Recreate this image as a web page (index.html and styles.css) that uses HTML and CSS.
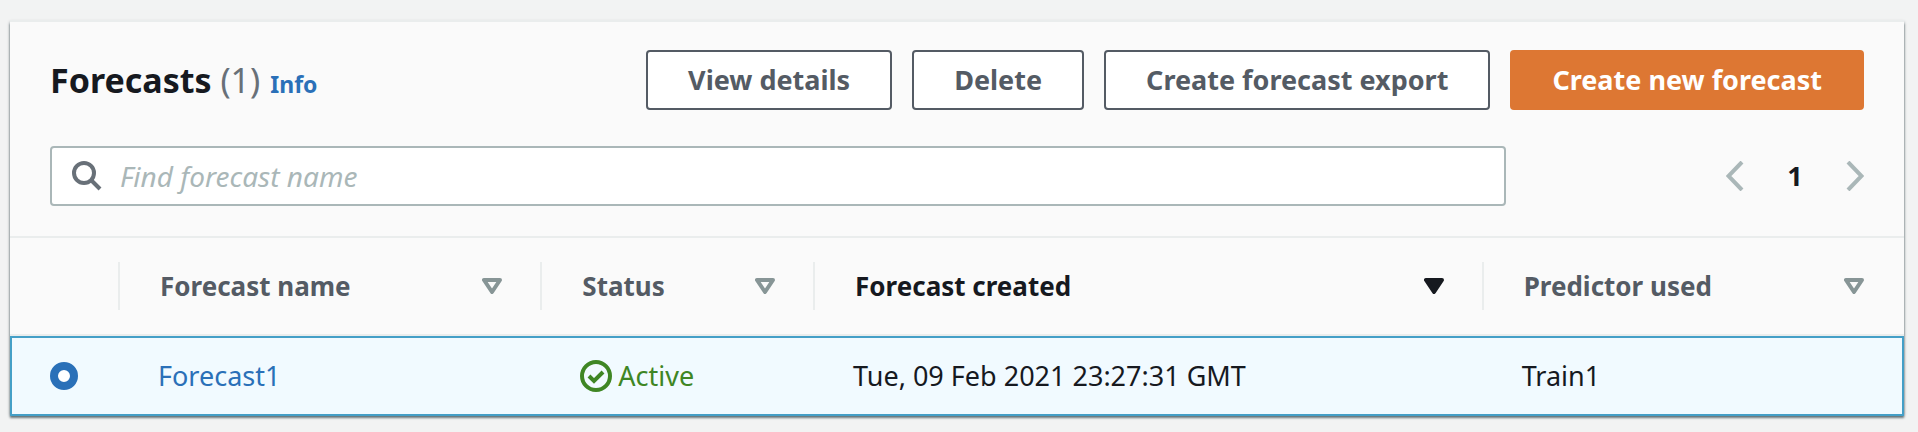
FILE: index.html
```html
<!DOCTYPE html>
<html lang="en">
<head>
<meta charset="utf-8">
<title>Forecasts</title>
<link rel="stylesheet" href="styles.css">
</head>
<body>
<main class="card">
  <header class="card-header">
    <div class="title-row">
      <div class="heading">
        <h1 class="title">Forecasts <span class="count">(1)</span></h1>
        <a class="info" href="#info">Info</a>
      </div>
      <div class="actions">
        <button class="btn" type="button">View details</button>
        <button class="btn" type="button">Delete</button>
        <button class="btn" type="button">Create forecast export</button>
        <button class="btn btn-primary" type="button">Create new forecast</button>
      </div>
    </div>
    <div class="filter-row">
      <label class="search">
        <svg class="search-icon" viewBox="0 0 30 30" aria-hidden="true"><circle cx="12" cy="12" r="10"/><path d="M19 19l9 9"/></svg>
        <input class="search-input" type="search" placeholder="Find forecast name" aria-label="Find forecast name">
      </label>
      <nav class="pager" aria-label="Pages">
        <button class="page-btn" type="button" aria-label="Previous page"><svg class="chevron" viewBox="0 0 18 30" aria-hidden="true"><path d="M16 1L2.500 15L16 29"/></svg></button>
        <button class="page-btn page-number" type="button" aria-current="page">1</button>
        <button class="page-btn" type="button" aria-label="Next page"><svg class="chevron" viewBox="0 0 18 30" aria-hidden="true"><path d="M2 1l13.500 14L2 29"/></svg></button>
      </nav>
    </div>
  </header>
  <table class="table">
    <colgroup>
      <col class="col-select"><col class="col-name"><col class="col-status"><col class="col-created"><col>
    </colgroup>
    <thead>
      <tr>
        <th class="head" aria-label="Selection"><div class="head-inner"></div></th>
        <th class="head"><div class="head-inner"><button class="sort" type="button">Forecast name<svg class="sort-icon" viewBox="0 0 20 16" aria-hidden="true"><path d="M2 2h16l-8 12z"/></svg></button></div></th>
        <th class="head"><div class="head-inner"><button class="sort" type="button">Status<svg class="sort-icon" viewBox="0 0 20 16" aria-hidden="true"><path d="M2 2h16l-8 12z"/></svg></button></div></th>
        <th class="head" aria-sort="descending"><div class="head-inner"><button class="sort sort-active" type="button">Forecast created<svg class="sort-icon" viewBox="0 0 20 16" aria-hidden="true"><path d="M2 2h16l-8 12z"/></svg></button></div></th>
        <th class="head"><div class="head-inner"><button class="sort" type="button">Predictor used<svg class="sort-icon" viewBox="0 0 20 16" aria-hidden="true"><path d="M2 2h16l-8 12z"/></svg></button></div></th>
      </tr>
    </thead>
    <tbody>
      <tr class="selected">
        <td class="cell"><input class="radio" type="radio" name="forecast" aria-label="Select Forecast1" checked></td>
        <td class="cell"><a class="link" href="#forecast1">Forecast1</a></td>
        <td class="cell"><span class="status"><svg class="status-icon" viewBox="0 0 32 32" aria-hidden="true"><circle cx="16" cy="16" r="14"/><path d="M9 16l5 5 9-9"/></svg>Active</span></td>
        <td class="cell">Tue, 09 Feb 2021 23:27:31 GMT</td>
        <td class="cell">Train1</td>
      </tr>
    </tbody>
  </table>
</main>
</body>
</html>
```
FILE: styles.css
```css
* {
  box-sizing: border-box;
}

body {
  margin: 0;
  padding: 22px 14px 16px 10px;
  background: #f2f3f3;
  color: #16191f;
  font-family: "Noto Sans", "Open Sans", sans-serif;
  font-size: 27px;
  line-height: 40px;
}

button,
input {
  font: inherit;
}

.card {
  background: #fafafa;
  box-shadow: 0 -2px 0 #eaeded, 0 2px 2px rgba(0, 28, 36, 0.5), 0 0 3px rgba(0, 28, 36, 0.4);
}

.card-header {
  display: flex;
  flex-direction: column;
  gap: 36px;
  padding: 28px 40px 30px;
  border-bottom: 2px solid #eaeded;
}

.title-row,
.filter-row,
.heading,
.actions,
.pager {
  display: flex;
}

.title-row {
  align-items: center;
  justify-content: space-between;
  gap: 20px;
}

.heading {
  align-items: baseline;
  gap: 10px;
  padding-top: 4px;
}

.title {
  margin: 0;
  font-size: 34px;
  font-weight: 700;
}

.count {
  color: #687078;
  font-weight: 400;
}

.info {
  color: #2a70b8;
  font-size: 23px;
  font-weight: 700;
  text-decoration: none;
}

.actions {
  gap: 20px;
}

.btn {
  padding: 8px 40px;
  border: 2px solid #545b64;
  border-radius: 4px;
  background: #fff;
  color: #545b64;
  font-weight: 700;
  white-space: nowrap;
}

.btn-primary {
  border-color: #dd7733;
  background: #dd7733;
  color: #fff;
}

.filter-row {
  align-items: center;
  gap: 220px;
}

.search {
  display: flex;
  flex: 1;
  align-items: center;
  gap: 18px;
  height: 60px;
  padding: 0 20px;
  border: 2px solid #aab7b8;
  border-radius: 4px;
  background: #fff;
}

.search-icon {
  width: 30px;
  height: 30px;
  fill: none;
  stroke: #687078;
  stroke-width: 4;
}

.search-input {
  flex: 1;
  min-width: 0;
  padding: 0;
  border: 0;
  outline: 0;
  background: transparent;
  font-size: 28px;
}

.search-input::placeholder {
  color: #aab7b8;
  font-style: italic;
  opacity: 1;
}

.pager {
  align-items: center;
  justify-content: space-between;
  width: 138px;
}

.page-btn {
  display: flex;
  padding: 0;
  border: 0;
  background: transparent;
}

.page-number {
  color: #16191f;
  font-weight: 700;
}

.chevron {
  width: 18px;
  height: 30px;
  fill: none;
  stroke: #aab7b8;
  stroke-width: 4;
}

.table {
  width: 100%;
  border-spacing: 0;
  table-layout: fixed;
}

.col-select {
  width: 110px;
}

.col-name {
  width: 22.3%;
}

.col-status {
  width: 14.4%;
}

.col-created {
  width: 35.3%;
}

.head {
  padding: 24px 0;
  border-bottom: 2px solid #eaeded;
  text-align: left;
}

.head-inner {
  display: flex;
  align-items: center;
  height: 48px;
  padding: 0 38px 0 40px;
  border-right: 2px solid #eaeded;
}

.head:last-child .head-inner {
  border-right-color: transparent;
}

.sort {
  display: flex;
  flex: 1;
  align-items: center;
  justify-content: space-between;
  padding: 0;
  border: 0;
  background: transparent;
  color: #545b64;
  font-size: 26px;
  font-weight: 700;
  white-space: nowrap;
}

.sort-icon {
  width: 20px;
  height: 16px;
  fill: none;
  stroke: #879596;
  stroke-width: 4;
  stroke-linejoin: round;
}

.sort-active {
  color: #16191f;
}

.sort-active .sort-icon {
  fill: #16191f;
  stroke: #16191f;
}

.cell {
  height: 80px;
  padding: 0 38px;
  border: 0 solid #449fc7;
  border-width: 2px 0;
  background: #f1faff;
  white-space: nowrap;
}

.cell:first-child {
  border-left-width: 2px;
}

.cell:last-child {
  border-right-width: 2px;
}

.radio {
  display: block;
  width: 28px;
  height: 28px;
  margin: 0;
  border: 8px solid #2a70b8;
  border-radius: 50%;
  background: #fff;
  appearance: none;
}

.link {
  color: #2a70b8;
  text-decoration: none;
}

.status {
  display: flex;
  align-items: center;
  gap: 6px;
  color: #3f8624;
}

.status-icon {
  width: 32px;
  height: 32px;
  fill: none;
  stroke: #3f8624;
  stroke-width: 4;
}
```
